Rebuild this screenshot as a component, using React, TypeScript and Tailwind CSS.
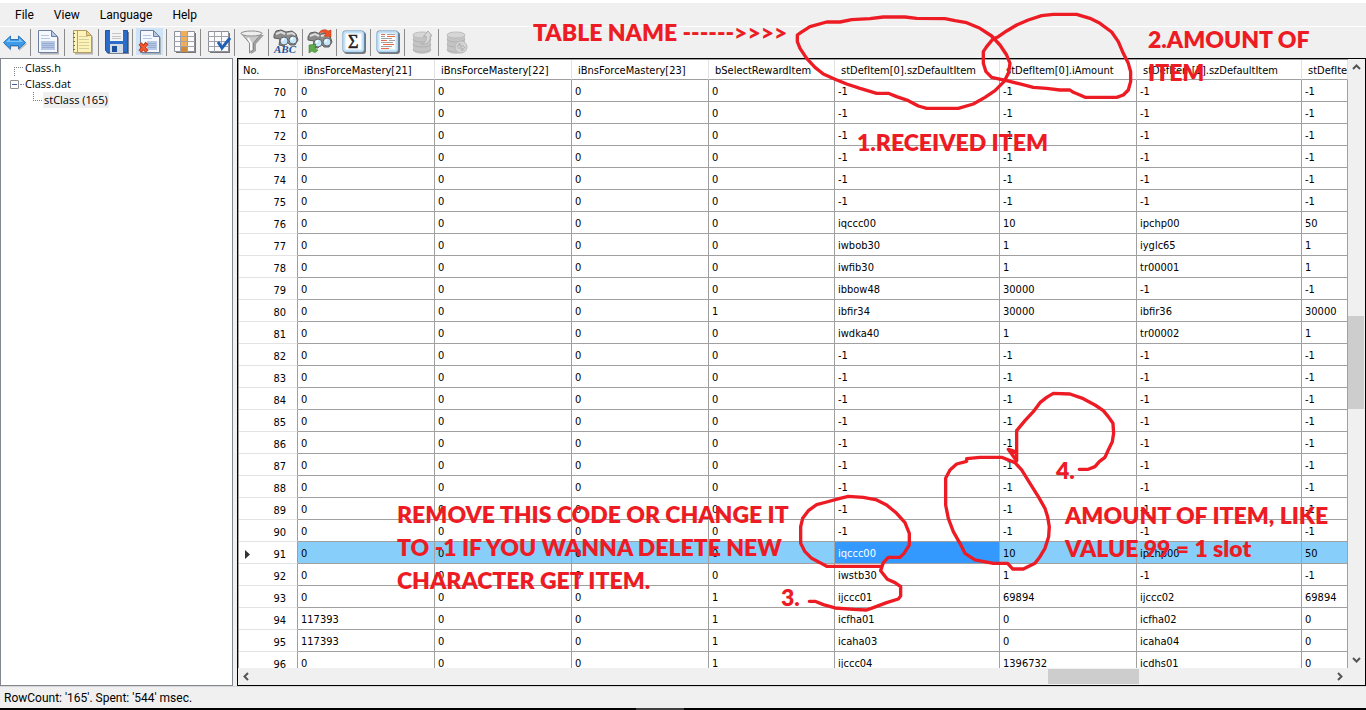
import React from 'react';

interface Row {
    no: number;
    cells: string[];
}

const COLUMNS = [
    'iBnsForceMastery[21]',
    'iBnsForceMastery[22]',
    'iBnsForceMastery[23]',
    'bSelectRewardItem',
    'stDefItem[0].szDefaultItem',
    'stDefItem[0].iAmount',
    'stDefItem[1].szDefaultItem',
    'stDefItem[1].iAmount',
];

const EMPTY_ROW = ['0', '0', '0', '0', '-1', '-1', '-1', '-1'];

// Rows that are not listed here hold the default values
const FILLED: Record<number, string[]> = {
    76: ['0', '0', '0', '0', 'iqccc00', '10', 'ipchp00', '50'],
    77: ['0', '0', '0', '0', 'iwbob30', '1', 'iyglc65', '1'],
    78: ['0', '0', '0', '0', 'iwfib30', '1', 'tr00001', '1'],
    79: ['0', '0', '0', '0', 'ibbow48', '30000', '-1', '-1'],
    80: ['0', '0', '0', '1', 'ibfir34', '30000', 'ibfir36', '30000'],
    81: ['0', '0', '0', '0', 'iwdka40', '1', 'tr00002', '1'],
    91: ['0', '0', '0', '0', 'iqccc00', '10', 'ipchp00', '50'],
    92: ['0', '0', '0', '0', 'iwstb30', '1', '-1', '-1'],
    93: ['0', '0', '0', '1', 'ijccc01', '69894', 'ijccc02', '69894'],
    94: ['117393', '0', '0', '1', 'icfha01', '0', 'icfha02', '0'],
    95: ['117393', '0', '0', '1', 'icaha03', '0', 'icaha04', '0'],
    96: ['0', '0', '0', '1', 'ijccc04', '1396732', 'icdhs01', '0'],
};

const ROWS: Row[] = Array.from({ length: 27 }, (_, i) => ({
    no: 70 + i,
    cells: FILLED[70 + i] || EMPTY_ROW,
}));

const SELECTED_ROW = 91;
const SELECTED_COL = 4;

const PageShape = () => (
    <>
        <path d="M5 3H18L24 9V25.500H5Z" fill="#8d8d8d" opacity=".6" />
        <path d="M3.500 1.500H16.500L22.500 7.500V23.500H3.500Z" fill="#f4f8fe" stroke="#6d80a0" />
        <path d="M16.500 1.500V7.500H22.500Z" fill="#b4c8e4" stroke="#6d80a0" />
    </>
);

const Binoculars = () => (
    <>
        <path d="M1 6L3 2L8 1L13 3L19 2L23 5L25 11L22 16L17 16L14 13L11 17L6 16L7 10L1 9Z" fill="#8a8a8a" stroke="#5e5e5e" />
        <path d="M3 5L8 3L12 5M14 5L19 4L22 6" stroke="#dcdcdc" strokeWidth="2" fill="none" />
        <circle cx="11" cy="12" r="4" fill="#c3e6fb" stroke="#666666" />
        <circle cx="20" cy="11" r="4" fill="#c3e6fb" stroke="#666666" />
        <path d="M9 12L11 9.500M18 11L20 8.500" stroke="#ffffff" strokeWidth="1.500" />
    </>
);

const Database = () => (
    <>
        <path d="M4 6V21C4 26 22 26 22 21V6Z" fill="#c4c4c4" />
        <ellipse cx="13" cy="6" rx="9" ry="3" fill="#d6d6d6" stroke="#bdbdbd" />
        <path d="M4 10C4 14 22 14 22 10M4 15C4 19 22 19 22 15M4 20C4 24 22 24 22 20" stroke="#b2b2b2" fill="none" />
    </>
);

const BlueBox = () => (
    <>
        <rect x="3" y="3" width="22" height="22" rx="3" fill="#777777" />
        <rect x="2" y="2" width="21" height="21" rx="2" fill="#ffffff" stroke="#5f93bd" />
        <rect x="3.500" y="3.500" width="18" height="18" rx="1" stroke="#c4e2f8" strokeWidth="2" fill="none" />
    </>
);

const TOOLS: { name: string; icon: React.ReactNode; active?: boolean; disabled?: boolean }[] = [
    {
        name: 'Switch',
        icon: (
            <>
                <path d="M3 15L10 7V11H18V7L26 15L18 22V18H10V22Z" fill="#8a8a8a" opacity=".5" />
                <path d="M2.500 13.500L9.500 7V10.500H17.500V7L24.500 13.500L17.500 20V16.500H9.500V20Z" fill="#3d9ce9" stroke="#2b73bb" />
                <path d="M5 13L9 9V12H18V9L22 13" fill="#7fc3f5" />
            </>
        ),
    },
    {
        name: 'Open structure',
        icon: (
            <>
                <PageShape />
                <path d="M6 6.500H14M6 9.500H15" stroke="#b5c7e0" />
                <path d="M6 12H20V21H6Z" fill="#b7c9e6" />
                <path d="M7 14.500H19M7 16.500H19M7 18.500H19" stroke="#95abd0" />
            </>
        ),
    },
    {
        name: 'Open data',
        icon: (
            <>
                <path d="M6 3H18L24 8V25.500H6Z" fill="#8d8d8d" opacity=".6" />
                <path d="M4.500 1.500H17.500L22.500 6.500V23.500H4.500Z" fill="#fdf3b6" stroke="#b89b62" />
                <path d="M17.500 1.500V6.500H22.500Z" fill="#e9cf75" stroke="#b89b62" />
                <path d="M10 7.500H19M10 10.500H20M10 13.500H20M10 16.500H20M10 19.500H20" stroke="#d3cf9e" />
                <path d="M8.500 2V23" stroke="#e88a68" />
                <path d="M4 4.500H6M4 8.500H6M4 12.500H6M4 16.500H6M4 20.500H6" stroke="#7b6b4b" />
            </>
        ),
    },
    {
        name: 'Save',
        icon: (
            <>
                <path d="M3 3H26V25H5L3 23Z" fill="#7f8794" />
                <path d="M2.500 1.500H24.500V23.500H4.500L2.500 21.500Z" fill="#2a6cc8" stroke="#1f55a5" />
                <path d="M7 1H20V12H7Z" fill="#f4f4f4" />
                <path d="M9 4.500H18M9 7.500H18M9 9.500H18" stroke="#c4c4c4" />
                <path d="M7 15H20V24H7Z" fill="#d5dbe4" />
                <path d="M9 17H14V23H9Z" fill="#1b4f9c" />
            </>
        ),
    },
    {
        name: 'Close file',
        active: true,
        icon: (
            <>
                <PageShape />
                <path d="M6 6.500H14M6 9.500H15" stroke="#b5c7e0" />
                <path d="M10 12H20V21H10Z" fill="#b7c9e6" />
                <path d="M11 14.500H19M11 16.500H19M11 18.500H19" stroke="#95abd0" />
                <path d="M3 14.500L10 22.500M10 14L3 22.500" stroke="#b93a1e" strokeWidth="4" />
                <path d="M3.500 15L9.500 22M9.500 15L3.500 22" stroke="#f55a2e" strokeWidth="2" />
            </>
        ),
    },
    {
        name: 'Columns',
        icon: (
            <>
                <path d="M5 4H25V24H5Z" fill="#777777" />
                <path d="M3.500 2.500H23.500V22.500H3.500Z" fill="#fbfbfd" stroke="#8e8e96" />
                <path d="M10 2H17V23H10Z" fill="#f2ad56" />
                <path d="M3 7.500H24M3 12.500H24M3 17.500H24M9.500 2V23M16.500 2V23" stroke="#a1a1aa" />
                <path d="M10 18H16V23H10Z" fill="#d08a3c" />
            </>
        ),
    },
    {
        name: 'Check grid',
        icon: (
            <>
                <path d="M5 4H25V24H5Z" fill="#777777" />
                <path d="M3.500 2.500H23.500V22.500H3.500Z" fill="#fbfbfd" stroke="#8e8e96" />
                <path d="M3 7.500H24M3 12.500H24M3 17.500H24M9.500 2V23M16.500 2V23" stroke="#a1a1aa" />
                <path d="M13 13L17 19L25 9" stroke="#1f61b4" strokeWidth="3" fill="none" />
            </>
        ),
    },
    {
        name: 'Filter',
        icon: (
            <>
                <path d="M4 6L12 15V25L17 22V15L25 6Z" fill="#a2a2a2" />
                <path d="M2 4L10.500 14V24L14.500 21V14L23 4Z" fill="#c9c9c9" stroke="#8a8a8a" />
                <ellipse cx="12.500" cy="4.500" rx="10.500" ry="2.500" fill="#eeeeee" stroke="#909090" />
                <path d="M9 9L12 14V21" stroke="#f8f8f8" strokeWidth="2" />
            </>
        ),
    },
    {
        name: 'Find text',
        icon: (
            <>
                <Binoculars />
                <text x="1" y="24" fontFamily="Liberation Serif, serif" fontSize="11" fontWeight="bold" fontStyle="italic" fill="#24529c">
                    ABC
                </text>
            </>
        ),
    },
    {
        name: 'Replace',
        icon: (
            <>
                <g transform="translate(0 2)">
                    <Binoculars />
                </g>
                <path d="M12 4C14 0 19 0 21 2L24 1L24 8L17 7L19 5C17 3 15 3 12 4Z" fill="#ee5126" stroke="#a82b0d" strokeWidth=".5" />
                <path d="M2 16L9 15L8 18C9 20 10 21 11 21C9 24 7 24 5 22L2 24Z" fill="#5fa84c" stroke="#2f7422" strokeWidth=".5" />
            </>
        ),
    },
    {
        name: 'Sum',
        icon: (
            <>
                <BlueBox />
                <text x="7" y="19" fontFamily="Liberation Serif, serif" fontSize="18" fill="#222222" stroke="#222222" strokeWidth=".5">
                    Σ
                </text>
            </>
        ),
    },
    {
        name: 'Report',
        icon: (
            <>
                <BlueBox />
                <path d="M6 5.500H10M12 7.500H20M6 11.500H12M8 15.500H19M6 19.500H14" stroke="#ef6a43" />
                <path d="M12 5.500H20M6 7.500H10M6 9.500H17M14 11.500H20M6 13.500H18M6 17.500H17" stroke="#a2a2a2" />
            </>
        ),
    },
    {
        name: 'Export to database',
        disabled: true,
        icon: (
            <>
                <Database />
                <path d="M12 15C17 14 18 10 17 7L14 8L19 2L23 7L21 7C22 12 18 16 12 15Z" fill="#dadada" stroke="#b0b0b0" />
            </>
        ),
    },
    {
        name: 'Refresh database',
        disabled: true,
        icon: (
            <>
                <Database />
                <circle cx="18" cy="18" r="6" fill="#d4d4d4" stroke="#bababa" />
                <path d="M14 18L17 14V17H21M22 18L19 22V19H15" stroke="#ababab" fill="none" />
            </>
        ),
    },
];

const MenuBar = () => (
    <nav className="flex h-6 shrink-0 items-center border-b border-white px-[5px] text-[12px]">
        {['File', 'View', 'Language', 'Help'].map((item) => (
            <button key={item} type="button" className="px-[10px] leading-4">
                {item}
            </button>
        ))}
    </nav>
);

const Toolbar = () => (
    <div className="flex h-[31px] shrink-0 items-start pt-px" role="toolbar">
        {TOOLS.map((tool, i) => (
            <div key={tool.name} className="flex">
                {i > 0 && <span className="ml-[3px] mr-[3px] mt-px h-[27px] w-px bg-[#8c8c8c]" />}
                <button
                    type="button"
                    title={tool.name}
                    aria-label={tool.name}
                    disabled={tool.disabled}
                    className={`flex h-[27px] w-[27px] items-center justify-center ${tool.active ? 'bg-[#cfe3f7]' : ''}`}
                >
                    <svg width="26" height="26" viewBox="0 0 26 26" fill="none">
                        {tool.icon}
                    </svg>
                </button>
            </div>
        ))}
    </div>
);

const StructTree = () => (
    <aside className="w-[233px] shrink-0 border border-[#828790] bg-white pt-px font-['Open_Sans',sans-serif] text-[11px] leading-4">
        <ul>
            <li className="flex h-4 items-center">
                <span className="ml-[13px] mt-[7px] h-[9px] w-[9px] border-l border-t border-dotted border-[#808080]" />
                <span className="ml-[2px]">Class.h</span>
            </li>
            <li>
                <div className="flex h-4 items-center">
                    <button
                        type="button"
                        aria-label="Collapse Class.dat"
                        className="ml-[9px] flex h-[9px] w-[9px] items-center justify-center rounded-[1px] border border-[#8f8f8f] bg-white"
                    >
                        <span className="h-px w-[5px] bg-[#3c5a9c]" />
                    </button>
                    <span className="ml-px w-[4px] border-t border-dotted border-[#808080]" />
                    <span className="ml-px">Class.dat</span>
                </div>
                <ul>
                    <li className="flex h-4 items-center">
                        <span className="mb-[7px] ml-8 h-[9px] w-[9px] border-b border-l border-dotted border-[#808080]" />
                        <span className="ml-px bg-[#f0f0f0] px-px">stClass (165)</span>
                    </li>
                </ul>
            </li>
        </ul>
    </aside>
);

const DataGrid = () => (
    <div className="min-h-0 min-w-0 flex-1 overflow-hidden border-l border-t border-[#a0a0a0] bg-white">
        <table className="w-full table-fixed border-separate border-spacing-0 whitespace-nowrap font-['DejaVu_Sans_Condensed','DejaVu_Sans',sans-serif] text-[11px]">
            <colgroup>
                <col className="w-[59px]" />
                <col className="w-[137px]" />
                <col className="w-[137px]" />
                <col className="w-[137px]" />
                <col className="w-[126px]" />
                <col className="w-[165px]" />
                <col className="w-[137px]" />
                <col className="w-[165px]" />
                <col />
            </colgroup>
            <thead>
                <tr className="h-5">
                    <th className="border-b border-r border-b-[#a0a0a0] border-r-[#e3e3e3] p-0 pl-1 pt-[3px] text-left font-normal leading-4">No.</th>
                    {COLUMNS.map((col) => (
                        <th
                            key={col}
                            className="overflow-hidden border-b border-r border-b-[#a0a0a0] border-r-[#e3e3e3] p-0 pl-[6px] pt-[2px] text-left font-normal leading-4"
                        >
                            {col}
                        </th>
                    ))}
                </tr>
            </thead>
            <tbody>
                {ROWS.map((row) => {
                    const selected = row.no === SELECTED_ROW;
                    return (
                        <tr key={row.no} className={`h-[22px] ${selected ? 'bg-[#87cefa]' : ''}`}>
                            <th className="border-b border-r border-b-[#e3e3e3] border-r-[#a0a0a0] bg-white p-0 font-normal">
                                <div className="flex items-center justify-between pl-[6px] pr-[11px] pt-1 leading-4">
                                    <svg width="6" height="10" viewBox="0 0 6 10">
                                        {selected && <path d="M0 0L5 4.500L0 9Z" fill="#333333" />}
                                    </svg>
                                    {row.no}
                                </div>
                            </th>
                            {row.cells.map((cell, i) => (
                                <td
                                    key={i}
                                    className={`overflow-hidden border-b border-r border-[#a0a0a0] p-0 pl-[3px] pt-[2px] leading-4 ${selected && i === SELECTED_COL ? 'bg-[#3399ff] text-white' : ''}`}
                                >
                                    {cell}
                                </td>
                            ))}
                        </tr>
                    );
                })}
            </tbody>
        </table>
    </div>
);

const Chevron = ({ d }: { d: string }) => (
    <svg width="9" height="9" viewBox="0 0 9 9" fill="none" stroke="#555555" strokeWidth="2">
        <path d={d} />
    </svg>
);

const VerticalScroll = () => (
    <div className="flex w-[17px] shrink-0 flex-col bg-[#f0f0f0]">
        <button type="button" aria-label="Scroll up" className="flex h-[17px] items-center justify-center">
            <Chevron d="M1 6L4.500 2.500L8 6" />
        </button>
        <div className="flex min-h-0 flex-1 flex-col">
            <div className="grow-[240]" />
            <div className="mr-px h-[93px] bg-[#cdcdcd]" />
            <div className="grow-[242]" />
        </div>
        <button type="button" aria-label="Scroll down" className="flex h-[17px] items-center justify-center">
            <Chevron d="M1 3L4.500 6.500L8 3" />
        </button>
    </div>
);

const HorizontalScroll = () => (
    <div className="flex h-[17px] shrink-0 bg-[#f0f0f0] pr-[17px]">
        <button type="button" aria-label="Scroll left" className="flex w-[17px] items-center justify-center">
            <Chevron d="M6 1L2.500 4.500L6 8" />
        </button>
        <div className="flex min-w-0 flex-1">
            <div className="grow-[793]" />
            <div className="mb-px mt-px w-[91px] bg-[#cdcdcd]" />
            <div className="grow-[192]" />
        </div>
        <button type="button" aria-label="Scroll right" className="flex w-[17px] items-center justify-center">
            <Chevron d="M3 1L6.500 4.500L3 8" />
        </button>
    </div>
);

// Hand-drawn notes that lie over the whole window
const Annotations = () => (
    <div className="pointer-events-none absolute inset-0 overflow-hidden whitespace-nowrap font-['Lato',sans-serif] text-[23px] font-extrabold leading-[33px] text-[#ed1c24]">
        <svg className="absolute left-0 top-0" width="1366" height="710" viewBox="0 0 1366 710" fill="none" stroke="#ed1c24" strokeLinejoin="round" strokeLinecap="round">
            <g transform="translate(780 0) scale(.3333)" strokeWidth="10">
                <path d="M52 105L62 98L90 80L140 66H180L215 59L270 56L310 51H375L410 55L495 56L525 62L560 68L600 85L635 108L660 135L680 165L690 190L686 218L672 245L645 272L615 292L580 312L535 325H440L415 318L385 302L350 290L325 280H290L240 265L200 252L165 238L130 222L105 202L80 175L60 145L52 125Z" />
                <path d="M638 118L655 110L680 93L710 75L745 60L785 47L820 43H890L930 55L960 70L995 96L1015 125L1030 160L1045 190L1052 215V245L1045 270L1030 285L1010 292H915L900 285L880 277L870 270H840L800 265L760 262L720 252L680 242L635 232L618 215L610 190V155L620 140Z" />
            </g>
            <g transform="translate(780 380) scale(.3333)" strokeWidth="10">
                <path d="M302 559H140L120 548L95 535L75 515L62 490V440L68 415L85 392L110 374L140 366L180 355L205 349L250 352L290 360L320 375L350 400L375 428L388 460V495L372 520L360 532H325L310 548L302 572L322 598L345 608L362 620V648L355 657L320 668L280 683L260 690L220 688L165 684L130 674L105 664H88" />
                <path d="M560 236L600 232H665L705 248L725 270L750 310L775 350L795 385L803 410L808 440L806 470L795 505L780 530L765 550L730 567H698L683 550H640L585 540L555 520L540 490L520 455L505 415L497 375V295L510 270L530 252L560 244Z" />
                <path d="M898 268H925L945 260L958 245L975 232L985 210L997 185L1001 160L999 130L985 110L970 92L945 75L910 56L870 42L820 40L800 52L780 68L760 95L735 122L710 152V243L685 208L710 216L695 220" />
            </g>
        </svg>
        <p className="absolute left-[533px] top-4">TABLE NAME ------&gt;&gt;&gt;&gt;</p>
        <p className="absolute left-[857px] top-[126px]">1.RECEIVED ITEM</p>
        <p className="absolute left-[1148px] top-[23px]">
            2.AMOUNT OF
            <br />
            ITEM
        </p>
        <p className="absolute left-[397px] top-[498px]">
            REMOVE THIS CODE OR CHANGE IT
            <br />
            TO -1 IF YOU WANNA DELETE NEW
            <br />
            CHARACTER GET ITEM.
        </p>
        <p className="absolute left-[781px] top-[581px]">3.</p>
        <p className="absolute left-[1056px] top-[454px]">4.</p>
        <p className="absolute left-[1065px] top-[499px]">
            AMOUNT OF ITEM, LIKE
            <br />
            VALUE 99 = 1 slot
        </p>
    </div>
);

const App: React.FC = () => {
    return (
        <div className="relative flex h-screen flex-col overflow-hidden bg-[#f0f0f0] font-['Roboto',sans-serif] text-black">
            <div className="h-[3px] shrink-0 bg-white" />
            <MenuBar />
            <Toolbar />
            <main className="flex min-h-0 flex-1 gap-1">
                <StructTree />
                <section className="flex min-w-0 flex-1 flex-col border border-black">
                    <div className="flex min-h-0 flex-1">
                        <DataGrid />
                        <VerticalScroll />
                    </div>
                    <HorizontalScroll />
                </section>
            </main>
            <footer className="flex h-[22px] shrink-0 items-center border-t border-[#d7d7d7] px-1 text-[12px] leading-4">
                RowCount: '165'. Spent: '544' msec.
            </footer>
            <div className="flex h-[2px] shrink-0 bg-black">
                <span className="ml-[636px] w-12 bg-[#404040]" />
            </div>
            <Annotations />
        </div>
    );
};

export default App;
